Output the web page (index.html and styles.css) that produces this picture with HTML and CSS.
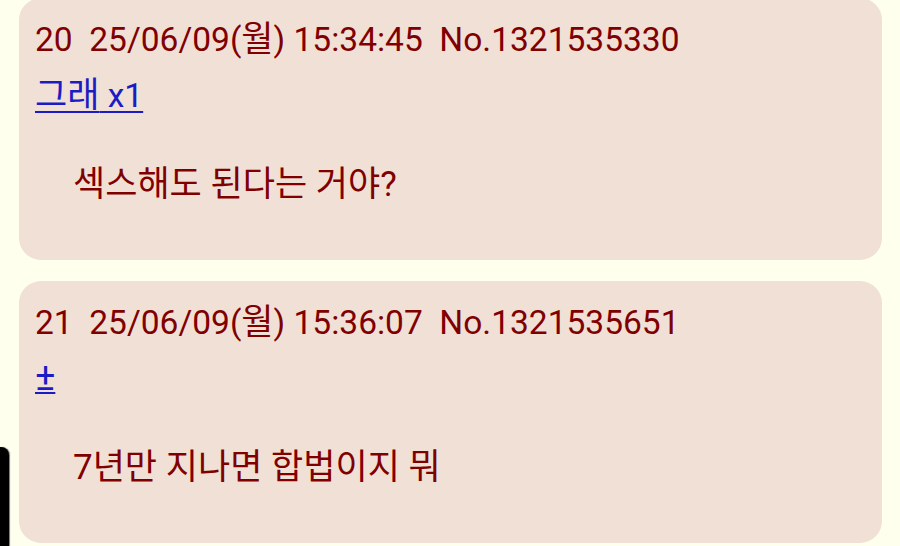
FILE: index.html
```html
<!DOCTYPE html>
<html lang="ko">
<head>
  <meta charset="UTF-8" />
  <meta name="viewport" content="width=device-width, initial-scale=1.0"/>
  <title>스레드</title>
  <link rel="stylesheet" href="styles.css">
</head>
<body>

  <div class="thread">
    <div class="reply">
      <div class="reply-head">20&nbsp; 25/06/09(<span class="ko">월</span>) 15:34:45&nbsp; No.1321535330</div>
      <div class="reply-tag"><a href="#"><span class="ko">그래</span> x1</a></div>
      <blockquote>섹스해도 된다는 거야?</blockquote>
    </div>

    <div class="reply">
      <div class="reply-head">21&nbsp; 25/06/09(<span class="ko">월</span>) 15:36:07&nbsp; No.1321535651</div>
      <div class="reply-tag"><a href="#" class="plusminus">±</a></div>
      <blockquote>7년만 지나면 합법이지 뭐</blockquote>
    </div>
  </div>

  <!-- edge handle on the left side of the screen -->
  <div class="edge-handle"></div>

</body>
</html>
```

FILE: styles.css
```css
* {
  box-sizing: border-box;
  margin: 0;
  padding: 0;
}

html, body {
  height: 100%;
  overflow: hidden;
}

body {
  background: #ffffee;
  color: #800000;
  font-family: Roboto, "Noto Sans CJK KR", sans-serif;
  font-size: 33.5px;
}

.thread {
  display: flex;
  flex-direction: column;
  gap: 21px;
  padding: 0 18px 0 19px;
  margin-top: -2px;
}

.reply {
  background: #f0e0d6;
  border-radius: 22px;
  padding: 22px 16px 15px;
}

.reply-head,
.reply-tag,
blockquote {
  line-height: 40px;
  white-space: nowrap;
}

.ko {
  font-size: 35px;
}

.reply-tag {
  margin-top: 16px;
}

.reply-tag a {
  color: #1c1cc4;
  text-decoration-thickness: 2px;
  text-underline-offset: 4px;
}

.reply-tag .plusminus {
  font-size: 38px;
  line-height: 0;
  text-underline-offset: 2px;
}

blockquote {
  font-size: 35px;
  margin: 49px 0 40px 38px;
}

.edge-handle {
  position: fixed;
  left: 0;
  bottom: 0;
  width: 9px;
  height: 99px;
  background: #000;
  border-top-right-radius: 8px;
  box-shadow: 1px 0 1px #777;
}
```
